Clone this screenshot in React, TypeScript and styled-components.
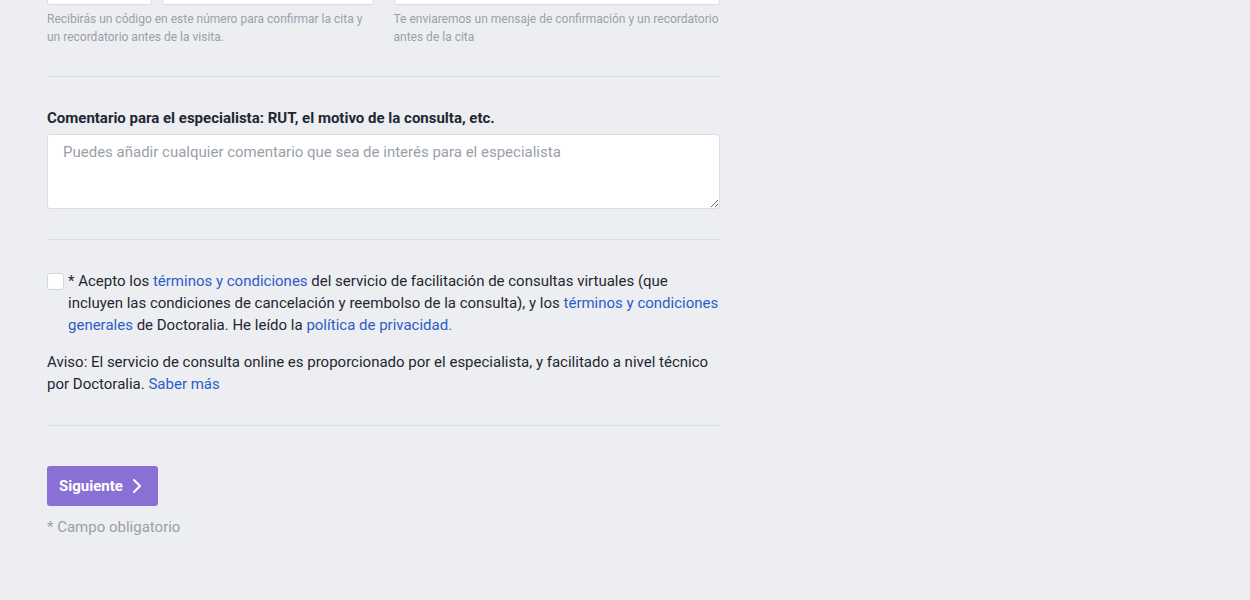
import React from 'react';
import styled, { createGlobalStyle } from 'styled-components';

const GlobalStyle = createGlobalStyle`
  *, *::before, *::after { box-sizing: border-box; }
  body {
    margin: 0;
    background: #edeef2;
    color: #1f2733;
    font-family: Roboto, "Liberation Sans", sans-serif;
    font-size: 15px;
    line-height: 22px;
  }
`;

const Page = styled.main`
  padding: 0 20px 60px 47px;
`;

const Form = styled.form`
  max-width: 673px;
`;

const Contact = styled.div`
  display: grid;
  grid-template-columns: repeat(2, minmax(0, 1fr));
  gap: 20px;
`;

const Field = styled.div`
  display: flex;
  flex-direction: column;
  gap: 5px;
`;

/* The inputs are scrolled past the top edge; only their lower rim shows. */
const Inputs = styled.div`
  display: flex;
  align-items: flex-end;
  gap: 10px;
  height: 5px;
  overflow: hidden;
`;

const Input = styled.input<{ $narrow?: boolean }>`
  flex: ${p => (p.$narrow ? '0 0 105px' : '1 1 0')};
  min-width: 0;
  height: 40px;
  padding: 0 15px;
  border: 1px solid #dadde2;
  border-radius: 3px;
  background: #fff;
  font: inherit;
`;

const Hint = styled.p`
  margin: 0;
  color: #999faa;
  font-size: 12px;
  line-height: 18px;
`;

const Divider = styled.hr<{ $wide?: boolean }>`
  margin: 30px 0 ${p => (p.$wide ? 40 : 30)}px;
  border: 0;
  border-top: 1px solid #dadde2;
`;

const Label = styled.label`
  display: block;
  margin-bottom: 5px;
  font-weight: 700;
`;

const Comment = styled.textarea`
  display: block;
  width: 100%;
  height: 75px;
  padding: 6px 15px;
  border: 1px solid #dadde2;
  border-radius: 3px;
  background: #fff;
  color: inherit;
  font: inherit;
  resize: vertical;

  &::placeholder { color: #999faa; }
`;

const Terms = styled.div`
  display: flex;
  align-items: flex-start;
  gap: 4px;
  margin-bottom: 15px;
`;

const Checkbox = styled.input`
  appearance: none;
  flex: none;
  width: 17px;
  height: 17px;
  margin: 3px 0 0;
  border: 1px solid #d3d7de;
  border-radius: 3px;
  background: #fff;

  &:checked { background: #8a70d6; }
`;

const Notice = styled.p`
  margin: 0;
`;

const Link = styled.a`
  color: #2c5cc5;
  text-decoration: none;
  &:hover { text-decoration: underline; }
`;

const Submit = styled.button`
  display: flex;
  align-items: center;
  gap: 8px;
  height: 40px;
  margin: 0 0 10px;
  padding: 0 15px 0 12px;
  border: 0;
  border-radius: 3px;
  background: #8a70d6;
  color: #fff;
  font: inherit;
  font-weight: 700;
  cursor: pointer;
`;

const Required = styled.p`
  margin: 0;
  color: #999faa;
`;

export default function App() {
  return (
    <>
      <GlobalStyle />
      <Page>
        <Form onSubmit={e => e.preventDefault()}>
          <Contact>
            <Field>
              <Inputs>
                <Input $narrow type="tel" aria-label="Prefijo" />
                <Input type="tel" aria-label="Teléfono" aria-describedby="phone-hint" />
              </Inputs>
              <Hint id="phone-hint">
                Recibirás un código en este número para confirmar la cita y un recordatorio antes de la visita.
              </Hint>
            </Field>
            <Field>
              <Inputs>
                <Input type="email" aria-label="Email" aria-describedby="email-hint" />
              </Inputs>
              <Hint id="email-hint">
                Te enviaremos un mensaje de confirmación y un recordatorio antes de la cita
              </Hint>
            </Field>
          </Contact>
          <Divider />
          <Label htmlFor="comment">Comentario para el especialista: RUT, el motivo de la consulta, etc.</Label>
          <Comment id="comment" placeholder="Puedes añadir cualquier comentario que sea de interés para el especialista" />
          <Divider />
          <Terms>
            <Checkbox type="checkbox" id="terms" />
            <label htmlFor="terms">
              * Acepto los <Link href="#terminos">términos y condiciones</Link> del servicio de facilitación de
              consultas virtuales (que incluyen las condiciones de cancelación y reembolso de la consulta), y los{' '}
              <Link href="#generales">términos y condiciones generales</Link> de Doctoralia. He leído la{' '}
              <Link href="#privacidad">política de privacidad.</Link>
            </label>
          </Terms>
          <Notice>
            Aviso: El servicio de consulta online es proporcionado por el especialista, y facilitado a nivel técnico
            por Doctoralia. <Link href="#mas">Saber más</Link>
          </Notice>
          <Divider $wide />
          <Submit type="submit">
            Siguiente
            <svg width="12" height="16" viewBox="0 0 12 16" fill="none" aria-hidden="true">
              <path d="M3 2l6 6-6 6" stroke="#fff" strokeWidth="2" strokeLinecap="round" strokeLinejoin="round" />
            </svg>
          </Submit>
          <Required>* Campo obligatorio</Required>
        </Form>
      </Page>
    </>
  );
}
